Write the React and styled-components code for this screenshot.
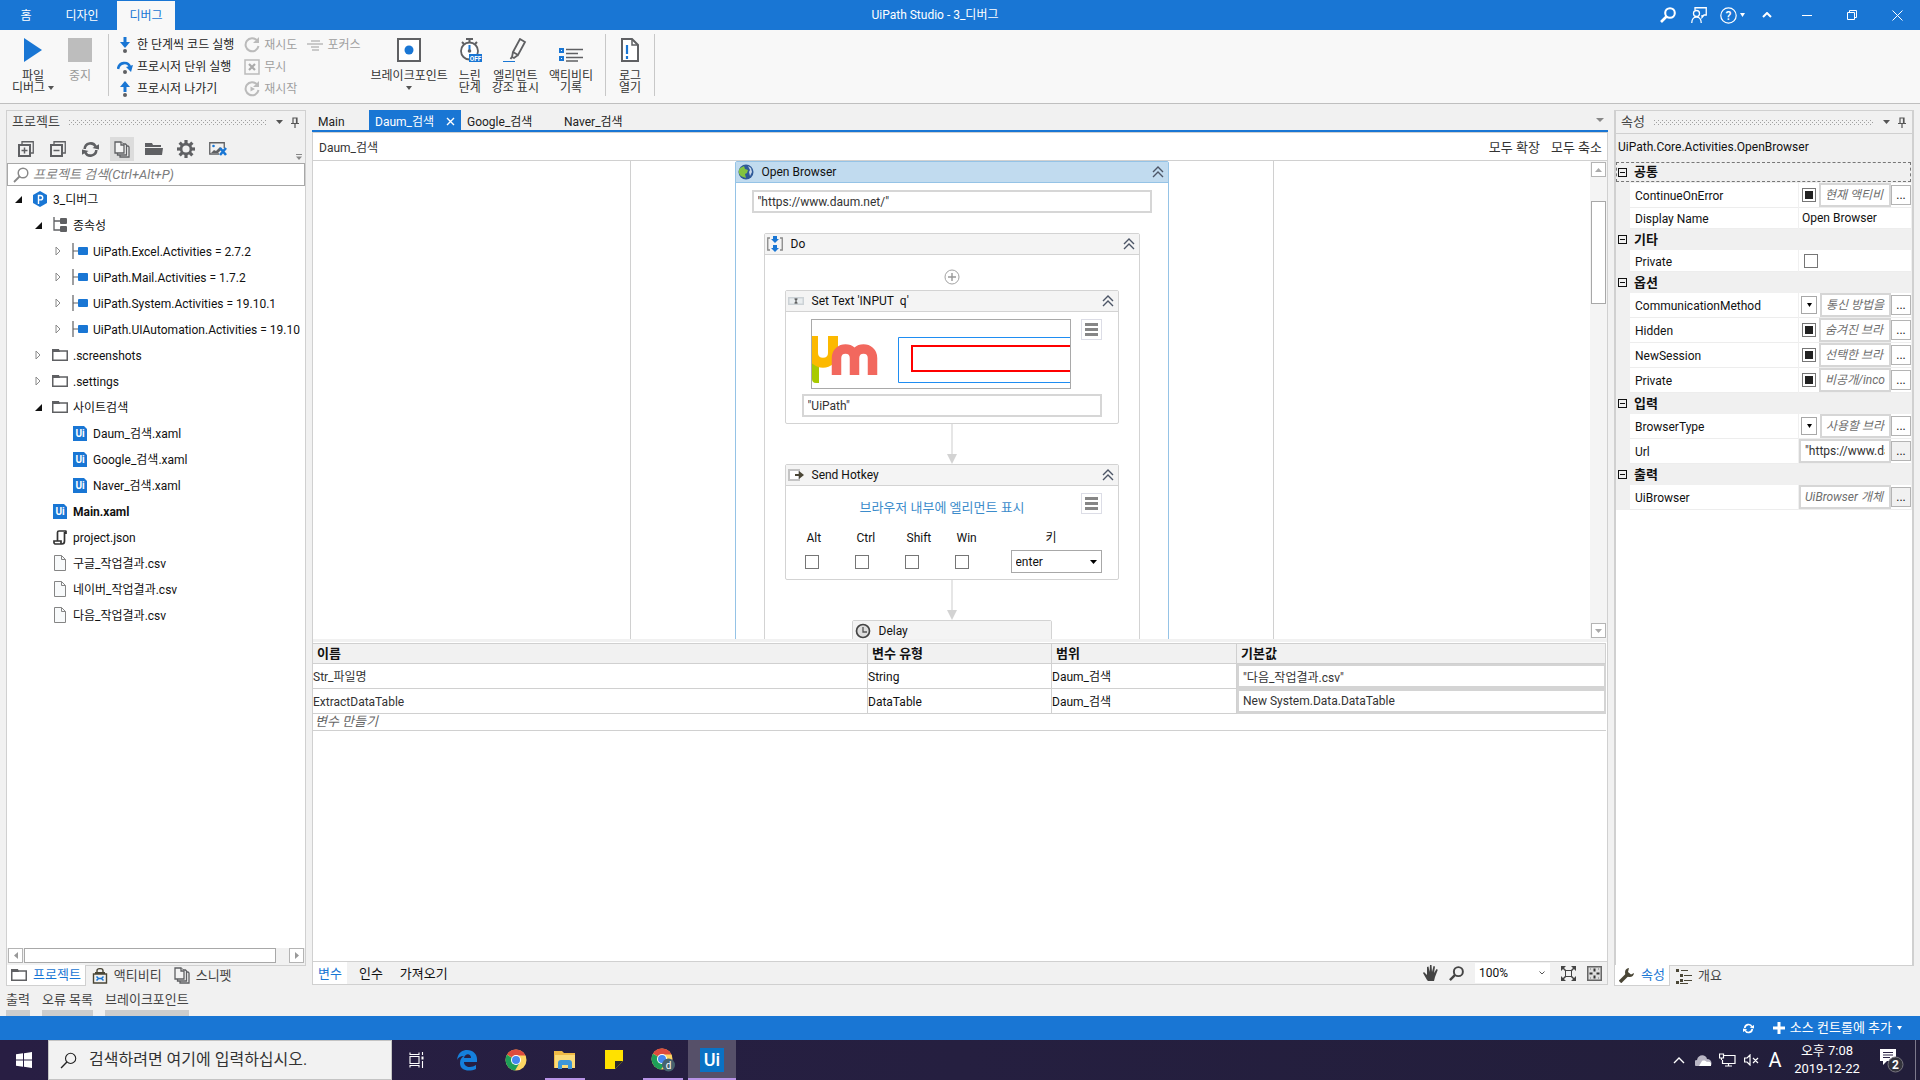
import React from 'react';
import styled, { createGlobalStyle, css } from 'styled-components';

const BLUE = '#1976d4';
const LINE = '#d0d0d0';
const INK = '#5f6063';

const Global = createGlobalStyle`
  * { box-sizing: border-box; }
  body { margin: 0; overflow: hidden; }
  body, button, input, select, table {
    font-family: Roboto, "Noto Sans CJK KR", sans-serif;
    font-size: 12px;
    line-height: 16px;
    color: #111;
  }
  button { margin: 0; padding: 0; border: 0; background: none; text-align: left; white-space: nowrap; }
  input { margin: 0; min-width: 0; outline: 0; }
  svg { display: block; flex: none; }
`;

/* ---------- shared parts ---------- */

const Svg = ({ w = 16, h = w, children, ...rest }) => (
  <svg width={w} height={h} viewBox={`0 0 ${w} ${h}`} fill="none" aria-hidden="true" {...rest}>{children}</svg>
);
const Caret = ({ color = '#555', w = 7 }) => (
  <Svg w={w} h={4}><path d={`M0 0h${w}L${w / 2} 4z`} fill={color} /></Svg>
);
const Pin = () => (
  <Svg w={8} h={11}><path d="M2 6V1h4v5M0 6.500h8M4 7v4M5.500 1v5" stroke="#555" strokeWidth="1.200" /></Svg>
);
const Chevrons = () => (
  <Svg w={12} h={12}><path d="M1 6l5-5 5 5M1 11l5-5 5 5" stroke="#4c5566" strokeWidth="1.400" /></Svg>
);
const DotsSvg = styled.svg`flex: 1; min-width: 0;`;
const Grip = ({ id }) => (
  <DotsSvg height="5" width="100%" aria-hidden="true">
    <pattern id={id} width="4" height="4" patternUnits="userSpaceOnUse">
      <rect width="1" height="1" fill="#a0a0a0" /><rect x="2" y="2" width="1" height="1" fill="#a0a0a0" />
    </pattern>
    <rect width="100%" height="5" fill={`url(#${id})`} />
  </DotsSvg>
);
const IconBox = styled.span`
  display: inline-flex; align-items: center; justify-content: center;
  width: ${p => p.$w || 16}px; flex: none;
`;

const Shell = styled.div`
  display: flex; flex-direction: column; height: 100vh; background: #f1f1f1;
`;

/* ---------- title bar ---------- */

const TitleBar = styled.header`
  display: flex; height: 30px; background: ${BLUE}; color: #fff; flex: none;
`;
const MenuTabs = styled.nav`display: flex; align-items: flex-end; width: 176px;`;
const MenuTab = styled.button`
  height: 29px; text-align: center; width: ${p => p.$w}px;
  color: ${p => (p.$active ? BLUE : '#fff')};
  background: ${p => (p.$active ? '#f8f8f8' : 'transparent')};
  margin-left: ${p => (p.$active ? 5 : 0)}px;
`;
const AppTitle = styled.div`
  flex: 1; display: flex; align-items: center; justify-content: center; padding-left: 42px;
`;
const TitleTools = styled.div`display: flex; align-items: center; justify-content: flex-end; width: 268px;`;
const TitleButton = styled.button`
  display: flex; align-items: center; justify-content: center; gap: 3px;
  height: 30px; width: ${p => p.$w}px;
`;

/* ---------- ribbon ---------- */

const Ribbon = styled.section`
  display: flex; height: 74px; padding-left: 10px; background: #f8f8f8;
  border-bottom: 1px solid #bfbfbf; flex: none;
`;
const RibbonGroup = styled.div`
  display: flex; align-items: flex-start; gap: ${p => p.$gap}px; padding: 0 12px 0 ${p => p.$start || 0}px; margin: 4px 0 7px;
  border-right: 1px solid #c8c8c8;
`;
const BigButton = styled.button`
  display: flex; flex-direction: column; align-items: center; gap: 8px;
  min-width: ${p => p.$w || 0}px; padding-top: 4px; line-height: 12px; text-align: center;
  color: ${p => (p.$off ? '#9a9a9a' : '#333')};
`;
const Caption = styled.span`display: flex; flex-direction: column; align-items: center;`;
const CaptionLine = styled.span`display: flex; align-items: center; gap: 3px; min-height: 12px;`;
const SmallStack = styled.div`display: flex; flex-direction: column;`;
const SmallButton = styled.button`
  display: flex; align-items: center; gap: 4px; height: 22px; flex: none;
  color: ${p => (p.$off ? '#9f9f9f' : '#222')};
`;

/* ---------- workspace ---------- */

const Workspace = styled.main`
  flex: 1; min-height: 0; display: grid; grid-template-columns: 300px minmax(0, 1fr) 300px;
  gap: 6px; padding: 6px 6px 0;
`;
const Dock = styled.section`display: flex; flex-direction: column; min-height: 0; min-width: 0;`;
const DockBody = styled.div`
  flex: 1; min-height: 0; display: flex; flex-direction: column; background: #fff; border: 1px solid ${LINE};
  border-width: 1px ${p => (p.$thick ? 2 : 1)}px;
`;
const DockHeader = styled.div`
  display: flex; align-items: center; height: 22px; gap: 9px; padding: 0 6px 0 5px;
  background: #f1f1f1; color: #444; font-size: 13px; flex: none;
`;
const HeaderTools = styled.span`display: flex; align-items: center; gap: 8px;`;
const DockTabs = styled.div`display: flex; height: 20px; margin-top: -1px; flex: none; position: relative;`;
const DockTab = styled.button`
  display: flex; align-items: center; gap: 6px; height: 21px; padding: 0 6px; font-size: 13px;
  color: ${p => (p.$active ? BLUE : '#444')};
  ${p => p.$active && css`background: #fff; border: 1px solid ${LINE}; border-top: 0; padding: 0 4px;`}
`;

const ToolRow = styled.div`
  display: flex; align-items: center; gap: 8px; height: 30px; padding: 2px 3px 0 7px; background: #f1f1f1; flex: none;
`;
const ToolButton = styled.button`
  display: flex; align-items: center; justify-content: center; width: 24px; height: 24px;
  background: ${p => (p.$active ? '#dcdcdc' : 'transparent')};
`;
const Overflow = styled.span`margin-left: auto; padding-top: 16px;`;
const SearchBox = styled.label`
  display: flex; align-items: center; gap: 4px; height: 23px; padding: 0 5px; background: #fff;
  border: 1px solid #a8a8a8; flex: none;
`;
const SearchInput = styled.input`
  flex: 1; border: 0; background: none; font-style: italic; font-size: 13px; padding: 0;
  &::placeholder { color: #7c7c7c; }
`;
const Tree = styled.ul`flex: 1; min-height: 0; margin: 0; padding: 0; list-style: none; overflow: hidden;`;
const TreeRow = styled.li`
  display: flex; align-items: center; height: 26px; white-space: nowrap;
  padding-left: ${p => 4 + p.$level * 20}px; font-weight: ${p => (p.$bold ? 700 : 400)};
`;
const TreeIcon = styled.span`
  display: flex; justify-content: center; width: 18px; margin: 0 4px 0 6px; flex: none;
`;
const TreeLabel = styled.span`padding-top: 2px;`;
const HScroll = styled.div`display: flex; gap: 1px; padding: 0 1px; height: 17px; background: #f1f1f1; flex: none;`;
const ScrollButton = styled.button`
  display: flex; align-items: center; justify-content: center; width: 15px; height: 15px;
  border: 1px solid #b4b4b4; background: #fff;
`;
const HThumb = styled.div`flex: 1; margin-right: 12px; height: 15px; background: #fff; border: 1px solid #a8a8a8;`;

/* ---------- designer ---------- */

const DocTabs = styled.div`
  display: flex; height: 22px; border-bottom: 2px solid ${BLUE}; padding-right: 4px; align-items: center; flex: none;
`;
const DocTab = styled.button`
  display: flex; align-items: center; justify-content: space-between; height: 20px; padding: 3px 6px 0;
  width: ${p => p.$w}px; color: ${p => (p.$active ? '#fff' : '#222')};
  background: ${p => (p.$active ? BLUE : 'transparent')};
`;
const Push = styled.span`margin-left: auto;`;
const DocBody = styled.div`
  flex: 1; min-height: 0; display: flex; flex-direction: column; background: #fff;
  border: 1px solid ${LINE};
`;
const Crumbs = styled.div`
  display: flex; align-items: center; gap: 11px; height: 28px; padding: 2px 5px 0 6px; border-bottom: 1px solid ${LINE}; flex: none;
`;
const Crumb = styled.button`color: #333; font-size: ${p => (p.$wide ? 13 : 12)}px;`;
const CanvasRow = styled.div`flex: 1; min-height: 0; display: flex;`;
const Canvas = styled.div`flex: 1; min-width: 0; overflow: hidden; display: flex; justify-content: center; align-items: flex-start;`;
const Sequence = styled.div`
  display: flex; flex-direction: column; align-items: center; width: 644px; border: solid ${LINE}; border-width: 0 1px;
`;
const VScroll = styled.div`
  display: flex; flex-direction: column; align-items: center; width: 17px; padding: 1px 0; background: #f4f4f4;
`;
const VThumb = styled.div`width: 15px; height: 103px; margin: 24px 0 auto; background: #fff; border: 1px solid #a8a8a8;`;

const Card = styled.article`
  width: ${p => p.$w}px; border: 1px solid ${p => (p.$selected ? '#95c3e6' : '#d3d3d3')}; border-radius: 2px;
  background: #fff; flex: none;
`;
const CardHead = styled.header`
  display: flex; align-items: center; height: 21px; padding: 0 4px 0 2px; gap: 8px;
  background: ${p => (p.$selected ? '#c1dbef' : '#f4f4f4')};
  border-bottom: 1px solid ${p => (p.$selected ? '#95c3e6' : '#d3d3d3')};
`;
const CardBody = styled.div`
  display: flex; flex-direction: column; align-items: center; padding: ${p => p.$pad};
`;
const Field = styled.input`
  display: block; width: 100%; height: 23px; padding: 0 4px; border: 2px solid #d6d6d6; background: #fff; color: #333;
  margin-top: ${p => p.$gap || 0}px;
`;
const AddMark = styled.div`padding: 14px 0 5px;`;
const Shot = styled.div`border: 1px solid #a9a9a9; width: 260px; height: 70px;`;
const CardLine = styled.div`
  display: flex; align-items: flex-start; justify-content: flex-end; gap: 10px; width: 100%;
`;
const MenuButton = styled.button`
  display: flex; align-items: center; justify-content: center; width: 21px; height: 21px;
  border: 1px solid #dcdde6; background: #fff;
`;
const PickLink = styled.a`
  flex: 1; text-align: center; color: #3c8ccb; text-decoration: none; padding: 7px 0 0 12px; font-size: 13px;
`;
const KeyRow = styled.div`display: flex; width: 100%; padding-top: 14px;`;
const KeyField = styled.label`
  display: flex; flex-direction: column; width: 50px; padding-left: 3px; gap: 9px;
`;
const KeyName = styled.span`padding-left: 2px;`;
const KeySelect = styled.label`
  margin-left: auto; width: 91px; display: flex; flex-direction: column; align-items: stretch; gap: 4px;
`;
const KeyCaption = styled.span`padding-left: 35px;`;
const SelectWrap = styled.span`position: relative; display: flex; height: ${p => p.$h}px;`;
const Select = styled.select`
  appearance: none; width: 100%; padding: 0 4px; outline: 0; background: #fff; border-radius: 0;
  border: ${p => (p.$plain ? 0 : '1px solid #a8a8a8')};
`;
const SelectMark = styled.span`position: absolute; right: 5px; top: 0; bottom: 0; display: flex; align-items: center; pointer-events: none;`;
const Check = styled.input`
  appearance: none; width: 14px; height: 14px; border: 1px solid #767676; background: #fff; border-radius: 0;
  display: grid; place-items: center; flex: none;
  ${p => p.$mixed && css`&::before { content: ''; width: 8px; height: 8px; background: #222; }`}
`;

/* ---------- variables ---------- */

const VarPane = styled.section`
  height: 322px; flex: none; background: #fff; border-top: 3px solid #f1f1f1; padding-right: 1px;
`;
const VarTable = styled.table`
  width: 100%; table-layout: fixed; border-collapse: separate; border-spacing: 0; border-top: 1px solid ${LINE}; margin-top: 1px;
`;
const Th = styled.th`
  height: 20px; padding: 0 4px; text-align: left; background: #f1f1f1; font-size: 13px;
  border: solid ${LINE}; border-width: 0 1px 1px 0; line-height: 16px;
`;
const Td = styled.td`
  height: 25px; padding: 2px 1px 0 0; border: solid ${LINE}; border-width: 0 1px 1px 0; color: ${p => (p.$dim ? '#333' : '#111')};
`;
const ValueTd = styled.td`padding: 2px 2px 3px; background: #d4d4d4;`;
const ValueInput = styled.input`display: block; width: 100%; height: 20px; border: 0; padding: 0 4px; color: #333;`;
const NewVarTd = styled.td`height: 17px; padding: 0 2px; border-bottom: 1px solid ${LINE};`;
const NewVar = styled.button`display: block; font-style: italic; font-size: 13px; color: #666;`;
const DocFoot = styled.div`
  display: flex; align-items: center; height: 23px; background: #f1f1f1; border: 1px solid ${LINE}; border-top: 0; flex: none;
`;
const FootTab = styled.button`
  height: 22px; padding: 1px 5px 0; margin-right: 7px; font-size: 13px;
  color: ${p => (p.$active ? BLUE : '#111')}; background: ${p => (p.$active ? '#fff' : 'transparent')};
`;
const FootTools = styled.div`display: flex; align-items: center; gap: 11px; margin-left: auto; padding-right: 5px;`;
const ZoomBox = styled.span`width: 75px;`;

/* ---------- properties ---------- */

const TypeName = styled.div`
  height: 29px; padding: 5px 2px 0; background: #f0f0f0; border-top: 1px solid ${LINE}; flex: none;
`;
const PropTable = styled.div`display: flex; flex-direction: column; background: #f0f0f0; padding-right: 1px; flex: none;`;
const Category = styled.button`
  display: flex; align-items: center; gap: 7px; height: 21px; padding: 0 2px; font-weight: 700; font-size: 13px;
  ${p => p.$focus && css`border: 1px dashed #777; padding: 0 1px; height: 20px; margin-bottom: 1px;`}
`;
const PropRow = styled.div`
  display: grid; grid-template-columns: minmax(0, 3fr) minmax(0, 2fr); gap: 1px;
  margin-left: 14px; height: ${p => p.$h || 25}px;
`;
const PropName = styled.label`
  display: flex; align-items: center; background: #fff; padding: 2px 0 0 5px; border-bottom: 1px solid #ededed;
`;
const PropValue = styled.div`
  display: flex; align-items: center; background: #fff; padding-left: ${p => p.$pad || 0}px; gap: 3px; border-bottom: 1px solid #ededed;
`;
const PropInput = styled.input`
  flex: 1; height: 24px; width: 20px; padding: 0 4px; border: 2px solid #d6d6d6; color: #333;
  &::placeholder { color: #6e6e6e; font-style: italic; opacity: 1; }
`;
const PlainInput = styled.input`border: 0; width: 100%; padding: 0 3px;`;
const MoreButton = styled.button`
  width: 20px; height: 20px; border: 1px solid #b4b4b4; text-align: center; margin-left: -3px; line-height: 16px;
  background: ${p => (p.$grey ? '#f1f1f1' : '#fff')};
`;
const DropButton = styled.button`
  display: flex; align-items: center; justify-content: center; width: 16px; height: 18px; border: 1px solid #a8a8a8; background: #fff;
`;

/* ---------- bottom ---------- */

const OutputTabs = styled.div`display: flex; gap: 12px; height: 31px; padding: 7px 6px 0; flex: none;`;
const OutputTab = styled.button`color: #444; font-size: 13px; border-bottom: 6px solid #cdcdcd; height: 24px; padding-bottom: 2px;`;
const StatusBar = styled.footer`
  display: flex; align-items: center; justify-content: flex-end; gap: 19px; height: 24px; padding-right: 18px;
  background: ${BLUE}; flex: none;
`;
const StatusButton = styled.button`display: flex; align-items: center; gap: 5px; color: #fff; font-size: 13px;`;
const Taskbar = styled.footer`
  display: flex; height: 40px; flex: none; color: #fff; background: linear-gradient(90deg, #281e43, #251f40 50%, #221e3a);
`;
const TaskButton = styled.button`
  display: flex; align-items: center; justify-content: center; width: ${p => p.$w || 49}px; height: 40px;
  background: ${p => (p.$active ? '#565069' : 'transparent')};
`;
const TaskMark = styled.span`
  display: flex; align-items: center; justify-content: center; width: ${p => (p.$wide ? 48 : 40)}px; height: 40px; padding-top: 2px;
  border-bottom: 2px solid ${p => (p.$open ? '#b893e6' : 'transparent')};
`;
const TaskSearch = styled.label`
  display: flex; align-items: center; gap: 12px; width: 344px; padding: 0 11px; background: #f2f2f2;
  border: 1px solid #c4c4c4;
`;
const TaskInput = styled.input`
  flex: 1; border: 0; padding: 0; background: none; font-size: 16px; line-height: 22px;
  &::placeholder { color: #333; opacity: 1; }
`;
const UiTile = styled.span`
  width: 24px; height: 24px; background: #0a72c4; color: #fff; font-size: 18px; line-height: 24px; font-weight: 500; text-align: center;
`;
const Tray = styled.div`display: flex; align-items: center; margin-left: auto;`;
const TrayButton = styled.button`
  display: flex; align-items: center; justify-content: center; width: ${p => p.$w || 24}px; height: 40px; color: #fff; font-size: 20px;
`;
const Clock = styled.div`width: 80px; text-align: center; font-size: 13px; line-height: 18px;`;
const ShowDesktop = styled.button`width: 5px; height: 40px; border-left: 1px solid #7d798c;`;

/* ---------- icons ---------- */

const StepInto = () => <Svg><path d="M8 0v7" stroke={BLUE} strokeWidth="3" /><path d="M3 5h10L8 11z" fill={BLUE} /><circle cx="8" cy="14" r="2" fill={INK} /></Svg>;
const StepOver = () => <Svg><path d="M1 10C2 3 11 2 13 8" stroke={BLUE} strokeWidth="2.600" /><path d="M9 8l7-2-2 7z" fill={BLUE} /><circle cx="8" cy="13" r="2" fill={INK} /></Svg>;
const StepOut = () => <Svg><path d="M8 4v7" stroke={BLUE} strokeWidth="3" /><path d="M3 6h10L8 0z" fill={BLUE} /><circle cx="8" cy="14" r="2" fill={INK} /></Svg>;
const Retry = ({ play }) => <Svg><path d="M13 3.500A6.500 6.500 0 1 0 14.500 9" stroke="#bbb" strokeWidth="2" /><path d="M15 0v6H9z" fill="#bbb" />{play && <path d="M6.500 5.500L11 8l-4.500 2.500z" fill="#bbb" />}</Svg>;
const Ignore = () => <Svg><rect x="1" y="1" width="14" height="14" stroke="#bbb" strokeWidth="1.500" /><path d="M5 5l6 6M11 5l-6 6" stroke="#aaa" strokeWidth="2.200" /></Svg>;
const Focus = () => <Svg><path d="M4 4h9M0 7h4M12 7h4M4 7h8M4 10h8M5 13h7" stroke="#bbb" strokeWidth="1.400" /></Svg>;
const Magnifier = ({ color = '#777', size = 16, sw = 2 }) => (
  <Svg w={size} viewBox="0 0 16 16"><circle cx="10" cy="6" r="4.800" stroke={color} strokeWidth={sw * 0.8} /><path d="M6.500 9.500L1 15" stroke={color} strokeWidth={sw} /></Svg>
);
const Expand = ({ open }) => (
  <IconBox $w={14}>
    {open
      ? <Svg w={7} h={7}><path d="M7 0v7H0z" fill="#111" /></Svg>
      : <Svg w={6} h={10}><path d="M1 1l4 4-4 4z" stroke="#8a8a8a" /></Svg>}
  </IconBox>
);
const Folder = () => <Svg w={16} h={12}><path d="M.75 11.250V2H15.250v9.250z" stroke={INK} strokeWidth="1.500" /><path d="M0 0h7l1 3H0z" fill={INK} /></Svg>;
const Pkg = () => <Svg w={16} h={16}><path d="M1 0v16M1 8h6" stroke={INK} strokeWidth="1.200" /><rect x="6" y="4" width="10" height="8" rx="1" fill={BLUE} /></Svg>;
const Deps = () => <Svg w={15} h={16}><path d="M1 0v13h8M1 4h8" stroke={INK} strokeWidth="1.300" /><rect x="7" y="1" width="7" height="6" rx="1" fill={INK} /><rect x="7" y="9" width="7" height="6" rx="1" fill={INK} /></Svg>;
const Project = () => <Svg w={14} h={16}><path d="M7 0l7 4v8l-7 4-7-4V4z" fill={BLUE} /><path d="M5.500 13V4.500h2a2.200 2.200 0 0 1 0 4.400h-2" stroke="#fff" strokeWidth="1.400" /></Svg>;
const Xaml = () => (
  <Svg w={14} h={16}><path d="M0 1h11l3 3v12H0z" fill={BLUE} /><text x="7" y="12" fill="#fff" fontSize="10" fontWeight="700" textAnchor="middle">Ui</text></Svg>
);
const Json = () => <Svg w={15} h={15}><path d="M4.500 11V2.500C4.500 1.500 5 1 6 1h7.500M11.500 2v9c0 2-1 3-2.500 3H3M13 1v3M1 11v2l1 1h6v-3z" stroke="#333" strokeWidth="1.700" /></Svg>;
const Page = () => <Svg w={12} h={16}><path d="M.5.500h7l4 4v11H.5z" fill="#f8fafb" stroke="#858585" /><path d="M7.500.500v4h4" stroke="#858585" /></Svg>;
const Refresh = ({ color = INK, size = 16 }) => (
  <Svg w={size} viewBox="0 0 16 16"><path d="M2.500 7.500A5.500 5.500 0 0 1 13 5.500M13.500 8.500A5.500 5.500 0 0 1 3 10.500" stroke={color} strokeWidth="2.400" /><path d="M9.800 6.500L16 8V3zM6.200 9.500L0 8v5z" fill={color} /></Svg>
);
const Gear = () => (
  <Svg w={18} h={18}>
    <g stroke={INK} strokeWidth="3.200">{[0, 45, 90, 135].map(a => <path key={a} d="M9 0v18" transform={`rotate(${a} 9 9)`} />)}</g>
    <circle cx="9" cy="9" r="6.200" fill={INK} /><circle cx="9" cy="9" r="3.600" fill="#f1f1f1" />
  </Svg>
);
const Globe = () => (
  <Svg><circle cx="8" cy="8" r="7.500" fill="#2f5a99" /><path d="M1 6c1-3 4-3 5-4l1 3 3 1-1 3-2 1 1 4-3-1C2 12 0 9 1 6z" fill="#83c440" /><path d="M10 2l3 2 1 4-2 4-1-4 1-2z" fill="#c9d8ea" /></Svg>
);
const DoIcon = () => <Svg><path d="M3 2H.75v12H3M13 2h2.250v12H13" stroke="#888" strokeWidth="1.300" /><path d="M6 0h4v3h2L8 7 4 3h2zM6 9h4v3h2l-4 4-4-4h2z" fill={BLUE} /></Svg>;
const TextBoxIcon = () => <Svg><rect x="0" y="4" width="16" height="8" fill="#ccd2d6" /><rect x="1.500" y="5.500" width="13" height="5" fill="#e9edef" /><path d="M8 6v4M6.500 6h3M6.500 10h3" stroke="#333" /></Svg>;
const HotkeyIcon = () => <Svg><rect x="1" y="3" width="10" height="10" fill="#fff" stroke="#c4c4c4" strokeWidth="2" /><path d="M7 8h5" stroke="#4a4636" strokeWidth="2" /><path d="M11 4l5 4-5 4z" fill="#4a4636" /></Svg>;
const ClockIcon = () => <Svg><circle cx="8" cy="8" r="6.500" stroke="#444" strokeWidth="1.700" fill="#ddd" /><path d="M8 4v5h4" stroke="#555" strokeWidth="1.300" /></Svg>;
const Bars = () => <Svg w={13} h={13}><path d="M0 1.500h13M0 6.500h13M0 11.500h13" stroke="#868686" strokeWidth="3" /></Svg>;
const Arrow = () => <Svg w={10} h={40}><path d="M5 0v31" stroke="#e6e6e6" strokeWidth="2" /><path d="M0 30h10L5 40z" fill="#d3d3d3" /></Svg>;
const Plus = () => <Svg w={16}><circle cx="8" cy="8" r="7" stroke="#a3a3a3" /><path d="M8 4v8M4 8h8" stroke="#999" strokeWidth="1.400" /></Svg>;
const Minus = () => <Svg w={9} h={9}><rect x=".5" y=".5" width="8" height="8" stroke="#111" /><path d="M2 4.500h5" stroke="#111" /></Svg>;
const SnippetPages = ({ w = 16 }) => (
  <Svg w={w} h={17} viewBox="0 0 16 17"><g fill="#f3f3f3" stroke={INK} strokeWidth="1.300"><path d="M6 5h8l1 1v10H6z" /><path d="M3.500 3h8l1 1v10h-9z" /><path d="M1 1h6l3 3v8H1z" /><path d="M7 1v3h3" /></g></Svg>
);
const Chrome = () => (
  <Svg w={22}>
    <circle cx="11" cy="11" r="10.500" fill="#fdd663" />
    <path d="M11 11L2 5.500A10.500 10.500 0 0 1 20.400 6.500H11z" fill="#dd4b3e" />
    <path d="M11 11L1.900 5.800A10.500 10.500 0 0 0 10 21.450L15 13z" fill="#1e9e58" />
    <circle cx="11" cy="11" r="5" fill="#fff" /><circle cx="11" cy="11" r="4" fill="#4587f0" />
  </Svg>
);

/* ---------- data ---------- */

const treeRows = [
  { level: 0, open: true, icon: <Project />, label: '3_디버그' },
  { level: 1, open: true, icon: <Deps />, label: '종속성' },
  { level: 2, open: false, icon: <Pkg />, label: 'UiPath.Excel.Activities = 2.7.2' },
  { level: 2, open: false, icon: <Pkg />, label: 'UiPath.Mail.Activities = 1.7.2' },
  { level: 2, open: false, icon: <Pkg />, label: 'UiPath.System.Activities = 19.10.1' },
  { level: 2, open: false, icon: <Pkg />, label: 'UiPath.UIAutomation.Activities = 19.10' },
  { level: 1, open: false, icon: <Folder />, label: '.screenshots' },
  { level: 1, open: false, icon: <Folder />, label: '.settings' },
  { level: 1, open: true, icon: <Folder />, label: '사이트검색' },
  { level: 2, icon: <Xaml />, label: 'Daum_검색.xaml' },
  { level: 2, icon: <Xaml />, label: 'Google_검색.xaml' },
  { level: 2, icon: <Xaml />, label: 'Naver_검색.xaml' },
  { level: 1, icon: <Xaml />, label: 'Main.xaml', bold: true },
  { level: 1, icon: <Json />, label: 'project.json' },
  { level: 1, icon: <Page />, label: '구글_작업결과.csv' },
  { level: 1, icon: <Page />, label: '네이버_작업결과.csv' },
  { level: 1, icon: <Page />, label: '다음_작업결과.csv' },
];

const propGroups = [
  { name: '공통', focus: true, rows: [
    { name: 'ContinueOnError', kind: 'mixed', hint: '현재 액티비' },
    { name: 'Display Name', kind: 'plain', value: 'Open Browser', h: 21 },
  ] },
  { name: '기타', rows: [{ name: 'Private', kind: 'check', h: 22 }] },
  { name: '옵션', rows: [
    { name: 'CommunicationMethod', kind: 'drop', hint: '통신 방법을' },
    { name: 'Hidden', kind: 'mixed', hint: '숨겨진 브라' },
    { name: 'NewSession', kind: 'mixed', hint: '선택한 브라' },
    { name: 'Private', kind: 'mixed', hint: '비공개/inco' },
  ] },
  { name: '입력', rows: [
    { name: 'BrowserType', kind: 'drop', hint: '사용할 브라' },
    { name: 'Url', kind: 'text', value: '"https://www.daum.net/"' },
  ] },
  { name: '출력', rows: [{ name: 'UiBrowser', kind: 'text', hint: 'UiBrowser 개체' }] },
];

const variables = [
  { name: 'Str_파일명', type: 'String', value: '"다음_작업결과.csv"' },
  { name: 'ExtractDataTable', type: 'DataTable', value: 'New System.Data.DataTable' },
];

/* ---------- sections ---------- */

const Top = () => (
  <TitleBar>
    <MenuTabs>
      <MenuTab $w={52}>홈</MenuTab><MenuTab $w={60}>디자인</MenuTab><MenuTab $w={58} $active>디버그</MenuTab>
    </MenuTabs>
    <AppTitle>UiPath Studio - 3_디버그</AppTitle>
    <TitleTools>
      <TitleButton $w={32} aria-label="search"><Magnifier color="#fff" sw={2.6} /></TitleButton>
      <TitleButton $w={32} aria-label="feedback">
        <Svg><path d="M4 3V.75h11.250V8H13l-2 2.500V8M5.500 9.500a3 3 0 1 0 0-6 3 3 0 0 0 0 6zM.75 16c0-8 9.500-8 9.500 0" stroke="#fff" strokeWidth="1.300" /></Svg>
      </TitleButton>
      <TitleButton $w={36} aria-label="help">
        <Svg w={17}><circle cx="8.500" cy="8.500" r="7.700" stroke="#fff" strokeWidth="1.200" /><text x="8.500" y="13" fontSize="12" fontWeight="500" fill="#fff" textAnchor="middle">?</text></Svg>
        <Caret color="#fff" w={5} />
      </TitleButton>
      <TitleButton $w={36} aria-label="collapse"><Svg w={10} h={6}><path d="M1 5l4-4 4 4" stroke="#fff" strokeWidth="2" /></Svg></TitleButton>
      <TitleButton $w={45} aria-label="minimize"><Svg w={10} h={1}><path d="M0 .5h10" stroke="#fff" /></Svg></TitleButton>
      <TitleButton $w={46} aria-label="restore"><Svg w={10}><path d="M.5 2.500h7v7h-7zM2.500 2.500v-2h7v7h-2" stroke="#fff" /></Svg></TitleButton>
      <TitleButton $w={47} aria-label="close"><Svg w={11}><path d="M.5.500l10 10M10.500.500l-10 10" stroke="#fff" /></Svg></TitleButton>
    </TitleTools>
  </TitleBar>
);

const Tools = () => (
  <Ribbon>
    <RibbonGroup $gap={8}>
      <BigButton $w={46}>
        <Svg w={24}><path d="M3 0l18 12L3 24z" fill={BLUE} /></Svg>
        <Caption><CaptionLine>파일</CaptionLine><CaptionLine>디버그<Caret w={6} /></CaptionLine></Caption>
      </BigButton>
      <BigButton $w={32} $off><Svg w={24}><rect width="24" height="24" fill="#bdbdbd" /></Svg><Caption>중지</Caption></BigButton>
    </RibbonGroup>
    <RibbonGroup $gap={10} $start={8}>
      <SmallStack>
        <SmallButton><StepInto />한 단계씩 코드 실행</SmallButton>
        <SmallButton><StepOver />프로시저 단위 실행</SmallButton>
        <SmallButton><StepOut />프로시저 나가기</SmallButton>
      </SmallStack>
      <SmallStack>
        <SmallButton $off><Retry />재시도</SmallButton>
        <SmallButton $off><Ignore />무시</SmallButton>
        <SmallButton $off><Retry play />재시작</SmallButton>
      </SmallStack>
      <SmallStack><SmallButton $off><Focus />포커스</SmallButton></SmallStack>
      <BigButton>
        <Svg w={24}><rect x="1" y="1" width="22" height="22" stroke={INK} strokeWidth="2" fill="#fff" /><circle cx="12" cy="12" r="4.500" fill={BLUE} /></Svg>
        <Caption><CaptionLine>브레이크포인트</CaptionLine><CaptionLine><Caret w={6} /></CaptionLine></Caption>
      </BigButton>
      <BigButton>
        <Svg w={24} h={24}><path d="M8 1h7M11.500 1v4M4 4l2 2M17 6l2-2" stroke={INK} strokeWidth="2" /><circle cx="11.500" cy="13" r="8.500" stroke={INK} strokeWidth="1.800" fill="#fff" /><path d="M11.500 7v5" stroke={BLUE} strokeWidth="2" /><circle cx="11.500" cy="13" r="1.800" fill={INK} /><rect x="11" y="16" width="13" height="8" fill={BLUE} /><text x="17.500" y="22.500" fontSize="6.500" fontWeight="700" fill="#fff" textAnchor="middle">OFF</text></Svg>
        <Caption><span>느린</span><span>단계</span></Caption>
      </BigButton>
      <BigButton>
        <Svg w={24}><path d="M17 1l5 3-7 13-5-3zM10 14l-1 5 2 1 4-3M9.500 18l-2 3" stroke={INK} strokeWidth="1.800" /><path d="M0 23.500h12" stroke={BLUE} /></Svg>
        <Caption><span>엘리먼트</span><span>강조 표시</span></Caption>
      </BigButton>
      <BigButton>
        <Svg w={24}><path d="M7 11.500h17M7 15.500h12M7 19.500h17M7 23h12" stroke={INK} strokeWidth="1.600" /><path d="M1 11h3v3H1zM1 19h3v3H1z" stroke={BLUE} strokeWidth="2" /></Svg>
        <Caption><span>액티비티</span><span>기록</span></Caption>
      </BigButton>
    </RibbonGroup>
    <RibbonGroup $gap={0} $start={12}>
      <BigButton>
        <Svg w={24}><path d="M4 1h10l6 6v16H4z" stroke={INK} strokeWidth="2" fill="#fff" /><path d="M14 1v6h6" stroke={INK} strokeWidth="1.500" /><path d="M9 7v9M9 18v3" stroke={BLUE} strokeWidth="2.200" /></Svg>
        <Caption><span>로그</span><span>열기</span></Caption>
      </BigButton>
    </RibbonGroup>
  </Ribbon>
);

const ProjectDock = () => (
  <Dock>
    <DockBody>
      <DockHeader>프로젝트<Grip id="grip-project" /><HeaderTools><Caret /><Pin /></HeaderTools></DockHeader>
      <ToolRow>
        <ToolButton aria-label="expand all"><Svg><path d="M4 3V.75h11.250V12H13" stroke={INK} strokeWidth="1.300" /><rect x="1" y="4" width="11" height="11" stroke={INK} strokeWidth="2" /><path d="M3.500 9.500h6M6.500 6.500v6" stroke={INK} strokeWidth="1.500" /></Svg></ToolButton>
        <ToolButton aria-label="collapse all"><Svg><path d="M4 3V.75h11.250V12H13" stroke={INK} strokeWidth="1.300" /><rect x="1" y="4" width="11" height="11" stroke={INK} strokeWidth="2" /><path d="M3.500 9.500h6" stroke={INK} strokeWidth="1.500" /></Svg></ToolButton>
        <ToolButton aria-label="refresh"><Refresh size={17} /></ToolButton>
        <ToolButton $active aria-label="show all files"><SnippetPages /></ToolButton>
        <ToolButton aria-label="open folder"><Svg w={18} h={12}><path d="M0 0h7l1 2h8v2H0zM0 5h18l-1 7H0z" fill={INK} /></Svg></ToolButton>
        <ToolButton aria-label="settings"><Gear /></ToolButton>
        <ToolButton aria-label="remove screenshots"><Svg w={18} h={14}><path d="M10 12H.75V.75h14.500V6" stroke={INK} strokeWidth="1.300" /><circle cx="4.500" cy="4" r="1.300" fill={BLUE} /><path d="M2 11l3-3 2 1 4-4 2 2-4 4z" fill={INK} /><path d="M11 6l6 7M17 6l-6 7" stroke={BLUE} strokeWidth="2.600" /></Svg></ToolButton>
        <Overflow><Svg w={6} h={6}><path d="M0 .5h6" stroke="#888" /><path d="M0 2.500h6L3 6z" fill="#888" /></Svg></Overflow>
      </ToolRow>
      <SearchBox><Magnifier color="#888" sw={1.800} /><SearchInput placeholder="프로젝트 검색(Ctrl+Alt+P)" /></SearchBox>
      <Tree>
        {treeRows.map(r => (
          <TreeRow key={r.label} $level={r.level} $bold={r.bold}>
            {r.open === undefined ? <IconBox $w={14} /> : <Expand open={r.open} />}
            <TreeIcon>{r.icon}</TreeIcon><TreeLabel>{r.label}</TreeLabel>
          </TreeRow>
        ))}
      </Tree>
      <HScroll>
        <ScrollButton aria-label="left"><Svg w={4} h={7}><path d="M4 0v7L0 3.500z" fill="#999" /></Svg></ScrollButton>
        <HThumb />
        <ScrollButton aria-label="right"><Svg w={4} h={7}><path d="M0 0v7l4-3.500z" fill="#999" /></Svg></ScrollButton>
      </HScroll>
    </DockBody>
    <DockTabs>
      <DockTab $active><Folder />프로젝트</DockTab>
      <DockTab>
        <Svg w={16}><path d="M5 4V2.500C5 0 11 0 11 2.500V4M1.500 6h13v9h-13z" stroke="#4a4636" strokeWidth="1.400" /><path d="M3 5h10" stroke="#4a4636" strokeWidth="2" /><path d="M4.500 8.500l2 2-2 2M11.500 8.500l-2 2 2 2M6 10.500h4" stroke={BLUE} strokeWidth="1.500" /></Svg>
        액티비티
      </DockTab>
      <DockTab><SnippetPages />스니펫</DockTab>
    </DockTabs>
  </Dock>
);

const CardTitle = ({ icon, children, selected }) => (
  <CardHead $selected={selected}>{icon}{children}<Push><Chevrons /></Push></CardHead>
);

const Designer = () => (
  <Canvas>
    <Sequence>
      <Card $w={434} $selected>
        <CardTitle selected icon={<Globe />}>Open Browser</CardTitle>
        <CardBody $pad="7px 16px 0">
          <Field aria-label="url" defaultValue={'"https://www.daum.net/"'} />
        </CardBody>
        <CardBody $pad="20px 28px 0">
          <Card $w={376}>
            <CardTitle icon={<DoIcon />}>Do</CardTitle>
            <CardBody $pad="0">
              <AddMark><Plus /></AddMark>
              <Card $w={334}>
                <CardTitle icon={<TextBoxIcon />}>Set Text 'INPUT&nbsp; q'</CardTitle>
                <CardBody $pad="7px 16px 6px">
                  <CardLine>
                    <Shot>
                      <Svg w={258} h={68}>
                        <path d="M0 36c5 1 7 6 7 12v15H4c-3 0-4-2-4-4z" fill="#a8ca00" />
                        <path d="M1 16v17c0 13 20 13 20 0V16" stroke="#fcb900" strokeWidth="10" />
                        <path d="M24.500 55V38c0-12 18-12 18 0v17M42.500 38c0-12 18-12 18 0v17" stroke="#f2685e" strokeWidth="9.500" />
                        <path d="M258 17.500H86.500v45H258" stroke="#1f8df2" />
                        <path d="M258 26H100v25h158" stroke="#f00" strokeWidth="2" />
                      </Svg>
                    </Shot>
                    <MenuButton aria-label="options"><Bars /></MenuButton>
                  </CardLine>
                  <Field $gap={5} aria-label="text" defaultValue={'"UiPath"'} />
                </CardBody>
              </Card>
              <Arrow />
              <Card $w={334}>
                <CardTitle icon={<HotkeyIcon />}>Send Hotkey</CardTitle>
                <CardBody $pad="7px 16px 6px">
                  <CardLine>
                    <PickLink href="#">브라우저 내부에 엘리먼트 표시</PickLink>
                    <MenuButton aria-label="options"><Bars /></MenuButton>
                  </CardLine>
                  <KeyRow>
                    {['Alt', 'Ctrl', 'Shift', 'Win'].map(k => (
                      <KeyField key={k}><KeyName>{k}</KeyName><Check type="checkbox" /></KeyField>
                    ))}
                    <KeySelect>
                      <KeyCaption>키</KeyCaption>
                      <SelectWrap $h={23}>
                        <Select defaultValue="enter"><option>enter</option></Select>
                        <SelectMark><Caret color="#000" /></SelectMark>
                      </SelectWrap>
                    </KeySelect>
                  </KeyRow>
                </CardBody>
              </Card>
              <Arrow />
              <Card $w={200}><CardHead><ClockIcon />Delay</CardHead></Card>
            </CardBody>
          </Card>
        </CardBody>
      </Card>
    </Sequence>
  </Canvas>
);

const Center = () => (
  <Dock>
    <DocTabs>
      <DocTab $w={57}>Main</DocTab>
      <DocTab $w={92} $active>Daum_검색<Svg w={9} h={9}><path d="M1 1l7 7M8 1L1 8" stroke="#fff" strokeWidth="1.400" /></Svg></DocTab>
      <DocTab $w={97}>Google_검색</DocTab>
      <DocTab $w={97}>Naver_검색</DocTab>
      <Push><Caret color="#888" w={8} /></Push>
    </DocTabs>
    <DocBody>
      <Crumbs><Crumb>Daum_검색</Crumb><Push /><Crumb $wide>모두 확장</Crumb><Crumb $wide>모두 축소</Crumb></Crumbs>
      <CanvasRow>
        <Designer />
        <VScroll>
          <ScrollButton aria-label="up"><Svg w={7} h={4}><path d="M0 4h7L3.500 0z" fill="#aaa" /></Svg></ScrollButton>
          <VThumb />
          <ScrollButton aria-label="down"><Caret color="#aaa" /></ScrollButton>
        </VScroll>
      </CanvasRow>
      <VarPane>
        <VarTable>
          <colgroup><col /><col width="184" /><col width="185" /><col width="369" /></colgroup>
          <thead><tr><Th>이름</Th><Th>변수 유형</Th><Th>범위</Th><Th>기본값</Th></tr></thead>
          <tbody>
            {variables.map(v => (
              <tr key={v.name}>
                <Td $dim>{v.name}</Td><Td>{v.type}</Td><Td>Daum_검색</Td>
                <ValueTd><ValueInput aria-label={v.name} defaultValue={v.value} /></ValueTd>
              </tr>
            ))}
            <tr><NewVarTd colSpan={4}><NewVar>변수 만들기</NewVar></NewVarTd></tr>
          </tbody>
        </VarTable>
      </VarPane>
    </DocBody>
    <DocFoot>
      <FootTab $active>변수</FootTab><FootTab>인수</FootTab><FootTab>가져오기</FootTab>
      <FootTools>
        <Svg w={15} h={16}><path d="M4 15L0 8l1-1 3 3V2l1.500-.5L6.500 7 7 0h1.500L9 7l1.500-6 1.500.5L11 8l2.500-4 1.300.8L12 12l-1 4H5z" fill="#444" /></Svg>
        <Magnifier color="#444" size={15} sw={2.600} />
        <ZoomBox>
          <SelectWrap $h={20}>
            <Select $plain aria-label="zoom" defaultValue="100%"><option>100%</option></Select>
            <SelectMark><Svg w={6} h={4}><path d="M.5.500L3 3 5.500.500" stroke="#555" /></Svg></SelectMark>
          </SelectWrap>
        </ZoomBox>
        <Svg w={15}><path d="M0 0h5L0 5zM15 0v5l-5-5zM0 15v-5l5 5zM15 15h-5l5-5z" fill="#444" /><rect x="4.500" y="4.500" width="6" height="6" stroke="#444" /><path d="M1 1l4 4M14 1l-4 4M1 14l4-4M14 14l-4-4" stroke="#444" strokeWidth="1.500" /></Svg>
        <Svg w={15}><rect x=".75" y=".75" width="13.500" height="13.500" stroke="#666" strokeWidth="1.500" fill="#ddd" /><path d="M7.500 2.500v3M7.500 9.500v3M2.500 7.500h3M9.500 7.500h3" stroke="#333" strokeWidth="2" /><path d="M3 3h1M11 3h1M3 12h1M11 12h1" stroke="#777" /></Svg>
      </FootTools>
    </DocFoot>
  </Dock>
);

const PropControl = ({ row, id }) => {
  if (row.kind === 'plain') return <PropValue><PlainInput id={id} defaultValue={row.value} /></PropValue>;
  if (row.kind === 'check') return <PropValue $pad={5}><Check id={id} type="checkbox" /></PropValue>;
  const textOnly = row.kind === 'text';
  return (
    <PropValue $pad={textOnly ? 0 : row.kind === 'mixed' ? 3 : 2}>
      {row.kind === 'mixed' && <Check type="checkbox" $mixed aria-label={row.name} />}
      {row.kind === 'drop' && <DropButton aria-label={row.name}><Caret color="#000" w={5} /></DropButton>}
      <PropInput id={id} placeholder={row.hint} defaultValue={row.value} />
      <MoreButton $grey={textOnly}>...</MoreButton>
    </PropValue>
  );
};

const Properties = () => (
  <Dock>
    <DockBody $thick>
      <DockHeader>속성<Grip id="grip-props" /><HeaderTools><Caret /><Pin /></HeaderTools></DockHeader>
      <TypeName>UiPath.Core.Activities.OpenBrowser</TypeName>
      <PropTable>
        {propGroups.map(g => (
          <React.Fragment key={g.name}>
            <Category $focus={g.focus}><Minus />{g.name}</Category>
            {g.rows.map(r => {
              const id = `prop-${g.name}-${r.name.replace(' ', '-')}`;
              return (
                <PropRow key={r.name} $h={r.h}>
                  <PropName htmlFor={id}>{r.name}</PropName>
                  <PropControl row={r} id={id} />
                </PropRow>
              );
            })}
          </React.Fragment>
        ))}
      </PropTable>
    </DockBody>
    <DockTabs>
      <DockTab $active><Svg><path d="M1 15l8-8" stroke="#4a4636" strokeWidth="3.500" /><path d="M10 1a4.500 4.500 0 1 0 5 5l-3 1.500L9 5z" fill="#4a4636" /></Svg>속성</DockTab>
      <DockTab><Svg><path d="M0 1h3v3H0zM4 6h3v3H4zM4 11h3v3H4zM0 13h3v3H0z" fill="#4a4636" /><path d="M5 2.500h7M8 7.500h8M8 12.500h8M4 15.500h8" stroke="#4a4636" strokeWidth="1.200" /></Svg>개요</DockTab>
    </DockTabs>
  </Dock>
);

const Desktop = () => (
  <Taskbar>
    <TaskButton $w={48} aria-label="start"><Svg w={16}><path d="M0 2.300L7 1.300V7.500H0zM8 1.200L16 0v7.500H8zM0 8.500h7v6.200l-7-1zM8 8.500h8V16l-8-1.200z" fill="#fff" /></Svg></TaskButton>
    <TaskSearch><Magnifier color="#222" size={17} sw={1.300} /><TaskInput placeholder="검색하려면 여기에 입력하십시오." /></TaskSearch>
    <TaskButton $w={48} aria-label="task view"><Svg><path d="M2 .5v2h9v-2M2 15.500v-2h9v2M2 4.500h9v7H2zM14.500 0v3M14.500 9v7" stroke="#fff" strokeWidth="1.100" /><path d="M13.500 4.500h2v3h-2z" fill="#fff" /></Svg></TaskButton>
    <TaskButton $w={53} aria-label="Edge"><Svg w={22}><path d="M1 11C2 3 7 1 11 1c6 0 10 4 10 9v3H8c0 6 8 6 12 3v4c-7 3-16 2-16-6 0-4 2-6 4-7-4 0-6 2-7 4zM8 9h7c0-5-6-5-7 0z" fill="#1580dc" /></Svg></TaskButton>
    <TaskButton $w={46} aria-label="Chrome"><Chrome /></TaskButton>
    <TaskButton $w={52} aria-label="Explorer"><TaskMark $open><Svg w={22} h={20}><path d="M0 1h8l2 2h11v15H0z" fill="#f0ba45" /><path d="M1 5h20v13H1z" fill="#fbdb78" /><path d="M4 19v-6c0-2 1-3 3-3h8c2 0 3 1 3 3v6h-4v-4H8v4z" fill="#3d96d9" /></Svg></TaskMark></TaskButton>
    <TaskButton $w={46} aria-label="Sticky Notes"><Svg w={18} h={20}><path d="M0 0h18v11l-8 8H0z" fill="#ffe100" /><path d="M10 19v-8h8z" fill="#2b2b2b" /></Svg></TaskButton>
    <TaskButton $w={51} aria-label="Chrome profile">
      <TaskMark $open><Svg w={24}><Chrome /><circle cx="17.500" cy="17" r="6.500" fill="#46626e" /><text x="17.500" y="20.500" fontSize="10" fill="#fff" textAnchor="middle">d</text></Svg></TaskMark>
    </TaskButton>
    <TaskButton $w={48} $active aria-label="UiPath"><TaskMark $open $wide><UiTile>Ui</UiTile></TaskMark></TaskButton>
    <Tray>
      <TrayButton aria-label="hidden icons"><Svg w={12} h={8}><path d="M1 7l5-5 5 5" stroke="#fff" strokeWidth="1.400" /></Svg></TrayButton>
      <TrayButton aria-label="OneDrive"><Svg w={17} h={11}><path d="M2 11a3 3 0 0 1 0-6c1-6 9-6 10-1 5 0 6 6 2 7z" fill="#b9b6c4" /><path d="M4 11L7 6c2-1 4 0 5 1 3-1 5 1 4 4z" fill="#fff" /></Svg></TrayButton>
      <TrayButton aria-label="network"><Svg w={17} h={14}><path d="M5 2.500h11v8H3.500V7M.5 1h4v4h-4zM2.500 5v2M9.500 10.500v3M6 13h7" stroke="#fff" strokeWidth="1.200" /></Svg></TrayButton>
      <TrayButton aria-label="volume"><Svg w={15} h={12}><path d="M.6 4h2.500L6 1v10L3.100 8H.6zM9 4l5 5M14 4l-5 5" stroke="#fff" strokeWidth="1.200" /></Svg></TrayButton>
      <TrayButton>A</TrayButton>
      <Clock>오후 7:08<br />2019-12-22</Clock>
      <TrayButton $w={48} aria-label="notifications"><Svg w={25} h={26}><path d="M1 2h16v12H8l-4 4v-4H1z" fill="#fff" /><path d="M4 5.500h10M4 8h10M4 10.500h7" stroke="#2a2344" /><circle cx="16.500" cy="17.500" r="7.500" fill="#33333b" stroke="#77757f" /><text x="16.500" y="22" fontSize="12" fontWeight="700" fill="#fff" textAnchor="middle">2</text></Svg></TrayButton>
      <ShowDesktop aria-label="show desktop" />
    </Tray>
  </Taskbar>
);

export default function App() {
  return (
    <Shell lang="ko">
      <Global />
      <Top />
      <Tools />
      <Workspace><ProjectDock /><Center /><Properties /></Workspace>
      <OutputTabs><OutputTab>출력</OutputTab><OutputTab>오류 목록</OutputTab><OutputTab>브레이크포인트</OutputTab></OutputTabs>
      <StatusBar>
        <StatusButton aria-label="sync"><Refresh color="#fff" size={11} /></StatusButton>
        <StatusButton><Svg w={12}><path d="M6 0v12M0 6h12" stroke="#fff" strokeWidth="3" /></Svg>소스 컨트롤에 추가<Caret color="#fff" w={5} /></StatusButton>
      </StatusBar>
      <Desktop />
    </Shell>
  );
}
